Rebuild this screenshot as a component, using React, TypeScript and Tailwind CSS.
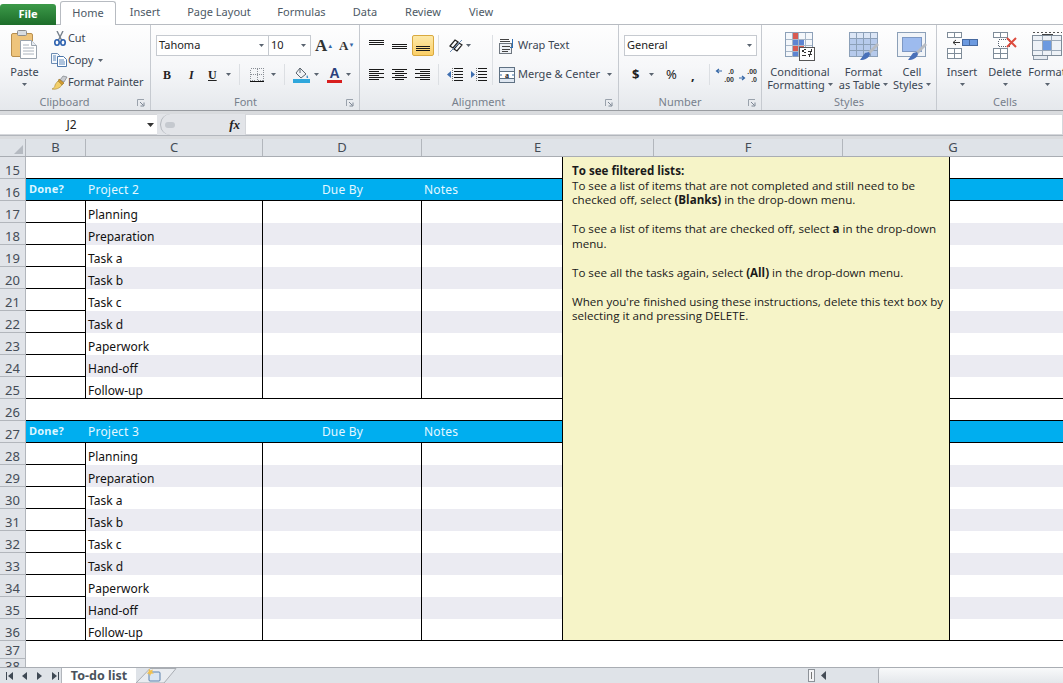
import * as React from "react"

const tasks = ["Planning", "Preparation", "Task a", "Task b", "Task c", "Task d", "Paperwork", "Hand-off", "Follow-up"]
const tabs = [
  { label: "Insert", w: "w-[58px]" },
  { label: "Page Layout", w: "w-[90px]" },
  { label: "Formulas", w: "w-[75px]" },
  { label: "Data", w: "w-[52px]" },
  { label: "Review", w: "w-[64px]" },
  { label: "View", w: "w-[52px]" },
]

function Caret({ className = "" }: { className?: string }) {
  return (
    <svg width="5" height="3" viewBox="0 0 5 3" className={"shrink-0 " + className}>
      <path d="M0 0h5L2.5 3z" fill="#5a6470" />
    </svg>
  )
}

function Launcher() {
  return (
    <svg width="8" height="8" viewBox="0 0 8 8" className="absolute right-[5px] top-[4px]">
      <path d="M.5 7V.5H7" fill="none" stroke="#9aa2ac" />
      <path d="M3 3l3.5 3.5M7 3.5V7H3.5" fill="none" stroke="#7d8794" />
    </svg>
  )
}

function Sep() {
  return <div className="h-[21px] w-px bg-[#dcdfe3] shrink-0" />
}

// horizontal text-alignment style glyph
function Lines({ rows, w = 15 }: { rows: [number, number, number][]; w?: number }) {
  return (
    <svg width={w} height="13" viewBox={`0 0 ${w} 13`} shapeRendering="crispEdges" className="shrink-0">
      {rows.map(([a, b, y], i) => (
        <path key={i} d={`M${a} ${y + 0.5}H${b}`} stroke="#1a1a1a" />
      ))}
    </svg>
  )
}

function Group({ label, width, labelPad, launcher, children }: { label: string; width: string; labelPad: string; launcher?: boolean; children: React.ReactNode }) {
  return (
    <div className={"relative flex flex-col shrink-0 border-r border-[#c6cad0] " + width}>
      <div className="flex flex-1 min-h-0">{children}</div>
      <div className={"relative h-[15px] text-center text-[11px] leading-[14px] text-[#77808c] " + labelPad}>
        {label}
        {launcher && <Launcher />}
      </div>
    </div>
  )
}

function PasteIcon() {
  return (
    <svg width="29" height="30" viewBox="0 0 29 30">
      <rect x="1.5" y="4.5" width="21" height="23" rx="1.5" fill="#eec47c" stroke="#b98f4e" />
      <rect x="7.5" y="1.5" width="9" height="5" rx="1" fill="#d9dde2" stroke="#8d8d8d" />
      <path d="M10.5 11.5h11l5 5v13h-16z" fill="#fff" stroke="#9aa3ad" />
      <path d="M21.5 11.5v5h5" fill="#e6ebf1" stroke="#9aa3ad" />
      <path d="M13 16h6M13 19h11M13 22h11M13 25h11" stroke="#aab2bc" />
    </svg>
  )
}

function CutIcon() {
  return (
    <svg width="12" height="15" viewBox="0 0 12 15">
      <path d="M3 0l5 10M9 0L4 10" stroke="#77808c" strokeWidth="1.4" />
      <ellipse cx="3" cy="11.5" rx="2.2" ry="2.7" fill="none" stroke="#2a5fae" strokeWidth="1.6" />
      <ellipse cx="9" cy="11.5" rx="2.2" ry="2.7" fill="none" stroke="#2a5fae" strokeWidth="1.6" />
    </svg>
  )
}

function CopyIcon() {
  return (
    <svg width="16" height="14" viewBox="0 0 16 14">
      <path d="M.5.5h6l2 2v8h-8z" fill="#f4f8fc" stroke="#6d8cb3" />
      <path d="M6.5 3.5h6l3 3v7h-9z" fill="#fff" stroke="#4d77ab" />
      <path d="M8 7h5M8 9h6M8 11h6M2 3h3M2 5h3M2 7h3" stroke="#5f88bb" />
    </svg>
  )
}

function BrushIcon() {
  return (
    <svg width="17" height="15" viewBox="0 0 17 15">
      <path d="M9 5l3-4 4 1-3 5z" fill="#c9ccd1" stroke="#7d8187" strokeWidth=".7" />
      <path d="M8 4l5 4-2 2-4-3z" fill="#d29a2e" stroke="#8e6a1c" strokeWidth=".6" />
      <path d="M7 6l4 4c-2 3-6 5-10 4 2-1 3-2 3-4 1-2 2-3 3-4z" fill="#f2cf6b" stroke="#a78632" strokeWidth=".6" />
    </svg>
  )
}

function BordersIcon() {
  return (
    <svg width="14" height="14" viewBox="0 0 14 14" shapeRendering="crispEdges">
      <path d="M.5 .5h13v12h-13zM7 1v11M1 6.5h12" fill="none" stroke="#8a8f96" strokeDasharray="1 1" />
      <path d="M0 13.5h14" stroke="#111" />
    </svg>
  )
}

function FillIcon() {
  return (
    <svg width="17" height="16" viewBox="0 0 17 16">
      <path d="M7 1l6 6-5 4-5-5z" fill="#f0f2f5" stroke="#5c6670" />
      <path d="M7 1v5" stroke="#5c6670" />
      <path d="M14 8c1 1.500 1.600 2.500.8 3-.8.300-1.500-.5-1.300-1.300z" fill="#3b88c3" />
      <rect y="12" width="17" height="4" fill="#2fa7dc" />
    </svg>
  )
}

function OrientIcon() {
  return (
    <svg width="24" height="15" viewBox="0 0 24 15">
      <path d="M2 8l5-6 3 2-5 6zM6 11l5-6 3 2-5 6z" fill="none" stroke="#222" strokeWidth="1.200" />
      <path d="M2 14L14 2" stroke="#6a8cb6" />
      <path d="M18 6h5l-2.500 3z" fill="#5a6470" />
    </svg>
  )
}

function IndentIcon({ right = false }: { right?: boolean }) {
  return (
    <svg width="16" height="13" viewBox="0 0 16 13" shapeRendering="crispEdges">
      <path d="M7 .5h9M7 3.500h9M7 6.500h9M7 9.500h9M7 12.500h9" stroke="#1a1a1a" />
      <path d="M5.500 0v13" stroke="#777" strokeDasharray="1 1" />
      <path d={right ? "M4 6.500L0 3v7z" : "M0 6.500L4 3v7z"} fill="#3f6fb0" shapeRendering="auto" />
    </svg>
  )
}

function WrapIcon() {
  return (
    <svg width="16" height="16" viewBox="0 0 16 16" shapeRendering="crispEdges">
      <rect x=".5" y="5.500" width="12" height="10" fill="#eef1f5" stroke="#6f7780" />
      <path d="M1 1.500h9M3 8.500h8M3 11h8M3 13.500h6M1 3.500h10" stroke="#444" />
      <path d="M13.500 1v8H11" fill="none" stroke="#2f6fb3" />
    </svg>
  )
}

function MergeIcon() {
  return (
    <svg width="16" height="16" viewBox="0 0 16 16">
      <rect x=".5" y=".5" width="15" height="15" fill="#dfe7f1" stroke="#5f7183" />
      <path d="M1 4.500h14M1 11.500h14" stroke="#5f7183" />
      <rect x="1" y="5" width="14" height="6" fill="#fff" />
      <text x="8" y="10.500" fontSize="8" fontWeight="700" textAnchor="middle" fill="#222" fontFamily="'Liberation Serif',serif">a</text>
      <path d="M1 8h2M13 8h2" stroke="#3b6ea8" />
    </svg>
  )
}

function DecIcon({ top, bottom, down = false }: { top: string; bottom: string; down?: boolean }) {
  return (
    <svg width="20" height="16" viewBox="0 0 20 16">
      <text x="19" y="6.500" textAnchor="end" fontSize="7" fontWeight="700" fill="#333" fontFamily="'Liberation Sans',sans-serif">{top}</text>
      <text x="19" y="14.500" textAnchor="end" fontSize="7" fontWeight="700" fill="#333" fontFamily="'Liberation Sans',sans-serif">{bottom}</text>
      <path d={down ? "M1 11h5M4 9l2.500 2L4 13" : "M7 4H2M4 2L1.500 4 4 6"} fill="none" stroke="#3567a6" strokeWidth="1.200" />
    </svg>
  )
}

function CondIcon() {
  return (
    <svg width="30" height="29" viewBox="0 0 30 29" shapeRendering="crispEdges">
      <rect x=".5" y=".5" width="27" height="24" fill="#f4f7fb" stroke="#8ca0b8" />
      <rect x="7" y="1" width="6" height="6" fill="#d85a50" />
      <rect x="7" y="7" width="12" height="6" fill="#5d84d2" />
      <rect x="7" y="13" width="12" height="6" fill="#d85a50" />
      <rect x="7" y="19" width="6" height="5" fill="#5d84d2" />
      <path d="M7 1v24M13 1v24M20 1v24M1 7h26M1 13h26M1 19h26" stroke="#a7b6c8" fill="none" />
      <rect x="14.500" y="15.500" width="15" height="13" fill="#fff" stroke="#555" />
      <path d="M21 17l-4 2 4 2M17 23h4M23 19h4M23 22h4M27 17l-3 8M17 25h0" fill="none" stroke="#333" />
    </svg>
  )
}

function TableIcon() {
  return (
    <svg width="30" height="29" viewBox="0 0 30 29">
      <rect x=".5" y=".5" width="28" height="24" fill="#dce6f6" stroke="#8ca0b8" />
      <rect x="1" y="7" width="27" height="17" fill="#b6caec" />
      <path d="M7.500 1v24M14.500 1v24M21.500 1v24M1 6.500h27M1 12.500h27M1 18.500h27" stroke="#8ca0b8" />
      <path d="M29 12l-9 9" stroke="#b8bcc2" strokeWidth="3" />
      <path d="M20 20l-4 1-5 7c5 0 9-2 10-6z" fill="#4970b8" />
    </svg>
  )
}

function StyleIcon() {
  return (
    <svg width="30" height="29" viewBox="0 0 30 29">
      <rect x=".5" y=".5" width="28" height="24" fill="#f1f4f8" stroke="#8ca0b8" />
      <rect x="5.500" y="5.500" width="19" height="14" fill="#9dbbee" stroke="#7d98c4" />
      <path d="M29 12l-9 9" stroke="#b8bcc2" strokeWidth="3" />
      <path d="M20 20l-4 1-5 7c5 0 9-2 10-6z" fill="#4970b8" />
    </svg>
  )
}

function InsertIcon() {
  return (
    <svg width="31" height="27" viewBox="0 0 31 27" shapeRendering="crispEdges">
      <path d="M.5.500h14v5h-14zM7.500 1v4M.5 16.500h14v10h-14zM7.500 17v9M1 21.500h13" fill="#fff" stroke="#7f8c99" />
      <rect x="15.500" y="7.500" width="15" height="6" fill="#6c9ae0" stroke="#46699f" />
      <path d="M22.500 8v5" stroke="#46699f" />
      <path d="M13 10.500H6M9 8l-3 2.500L9 13" fill="none" stroke="#333" shapeRendering="auto" />
    </svg>
  )
}

function DeleteIcon() {
  return (
    <svg width="25" height="27" viewBox="0 0 25 27">
      <path d="M.5.500h14v5h-14zM7.500 1v4M.5 16.500h14v10h-14zM7.500 17v9M1 21.500h13" fill="#fff" stroke="#7f8c99" shapeRendering="crispEdges" />
      <rect x="5.500" y="7.500" width="11" height="7" fill="#fff" stroke="#5a6470" strokeDasharray="1 1" shapeRendering="crispEdges" />
      <path d="M14 6l9 9M23 6l-9 9" stroke="#dd4b3e" strokeWidth="2" />
    </svg>
  )
}

function FormatCellIcon() {
  return (
    <svg width="31" height="29" viewBox="0 0 31 29" shapeRendering="crispEdges">
      <path d="M1 .5h29" stroke="#555" strokeDasharray="2 2" />
      <path d="M10 2.500h11" stroke="#444" />
      <rect x=".5" y="3.500" width="29" height="20" rx="1" fill="#eef2f7" stroke="#7f8c99" />
      <rect x="10" y="8" width="9" height="11" fill="#6c9ae0" />
      <path d="M10 4v19M19.500 4v19M1 8.500h28M1 18.500h28" stroke="#9aa8b8" />
      <path d="M1.500 24v3.500h14V24" fill="#e6ebf1" stroke="#8a97a6" />
    </svg>
  )
}

function BigButton({ icon, lines, width }: { icon: React.ReactNode; lines: [string, string | null]; width: string }) {
  return (
    <div className={"flex flex-col items-center shrink-0 pt-[7px] " + width}>
      <div className="h-[33px] flex items-start">{icon}</div>
      <div className="text-[11px] leading-[13px] whitespace-nowrap text-[#3b4653]">{lines[0]}</div>
      {lines[1] ? (
        <div className="flex items-center gap-[3px] text-[11px] leading-[13px] whitespace-nowrap text-[#3b4653]">
          {lines[1]}
          <Caret />
        </div>
      ) : (
        <div className="h-[13px] flex items-center"><Caret /></div>
      )}
    </div>
  )
}

function Ribbon() {
  return (
    <div className="flex h-[85px] text-[#3b4653] bg-gradient-to-b from-[#fefefe] via-[#f6f7f9] to-[#e5e8ec]">
      <Group label="Clipboard" width="w-[151px]" labelPad="pr-[21px]" launcher>
        <div className="flex flex-col items-center w-[49px] pt-[4px]">
          <PasteIcon />
          <div className="mt-[6px] text-[11px] leading-[13px]">Paste</div>
          <Caret className="mt-[5px]" />
        </div>
        <div className="flex flex-col pt-[2px] pl-[2px] text-[11px] tracking-[-0.15px] whitespace-nowrap">
          <div className="flex items-center h-[22px]"><div className="w-[17px] pl-[3px]"><CutIcon /></div>Cut</div>
          <div className="flex items-center h-[22px]"><div className="w-[17px]"><CopyIcon /></div>Copy<Caret className="ml-[5px]" /></div>
          <div className="flex items-center h-[22px]"><div className="w-[17px]"><BrushIcon /></div>Format Painter</div>
        </div>
      </Group>

      <Group label="Font" width="w-[209px]" labelPad="pr-[19px]" launcher>
        <div className="flex flex-col pl-[5px] pt-[10px] w-full">
          <div className="flex items-center h-[21px]">
            <div className="flex items-center justify-between w-[113px] h-full bg-white border border-[#c6cad0] pl-[2px] pr-[4px] text-[11px] text-[#222]">Tahoma<Caret /></div>
            <div className="flex items-center justify-between w-[42px] h-full bg-white border border-l-0 border-[#c6cad0] pl-[2px] pr-[4px] text-[11px] text-[#222]">10<Caret /></div>
            <div className="ml-[4px] w-[21px] text-[17px] font-bold leading-none font-['Liberation_Serif',serif] text-[#333]">A<sup className="text-[6px] text-[#3567a6]">▲</sup></div>
            <div className="ml-[3px] w-[17px] text-[13px] font-bold leading-none font-['Liberation_Serif',serif] text-[#333]">A<sup className="text-[6px] text-[#3567a6]">▼</sup></div>
          </div>
          <div className="flex items-center h-[21px] mt-[8px] text-[#222]">
            <div className="w-[26px] pl-[7px] text-[12px] font-bold font-['Liberation_Serif',serif]">B</div>
            <div className="w-[23px] pl-[7px] text-[12px] font-bold italic font-['Liberation_Serif',serif]">I</div>
            <div className="w-[18px] pl-[3px] text-[12px] font-bold underline font-['Liberation_Serif',serif]">U</div>
            <Caret className="ml-[3px] mr-[8px]" />
            <Sep />
            <div className="ml-[10px]"><BordersIcon /></div>
            <Caret className="ml-[7px] mr-[8px]" />
            <Sep />
            <div className="ml-[8px]"><FillIcon /></div>
            <Caret className="ml-[4px]" />
            <div className="relative ml-[8px] w-[15px] h-[16px] text-center text-[14px] leading-[13px] font-bold font-['Liberation_Sans',sans-serif] text-[#2a3f7c]">
              A
              <div className="absolute bottom-0 left-0 right-0 h-[3px] bg-[#d81e1e]" />
            </div>
            <Caret className="ml-[4px]" />
          </div>
        </div>
      </Group>

      <Group label="Alignment" width="w-[259px]" labelPad="pr-[21px]" launcher>
        <div className="flex flex-col pl-[9px] pt-[10px]">
          <div className="flex items-center h-[21px]">
            <div className="w-[23px]"><Lines rows={[[0, 15, 1], [0, 15, 3], [0, 15, 5]]} /></div>
            <div className="w-[20px]"><Lines rows={[[0, 15, 5], [0, 15, 7], [0, 15, 9]]} /></div>
            <div className="flex items-center justify-center w-[22px] h-[21px] rounded-[2px] bg-gradient-to-b from-[#fde9a8] to-[#fbcf66] border border-[#d9a93f]"><Lines rows={[[0, 14, 7], [0, 14, 9], [0, 14, 11]]} /></div>
            <div className="ml-[4px] mr-[9px]"><Sep /></div>
            <OrientIcon />
          </div>
          <div className="flex items-center h-[21px] mt-[8px]">
            <div className="w-[23px]"><Lines rows={[[0, 15, 1], [0, 10, 3], [0, 15, 5], [0, 10, 7], [0, 15, 9], [0, 10, 11]]} /></div>
            <div className="w-[23px]"><Lines rows={[[0, 15, 1], [3, 12, 3], [0, 15, 5], [3, 12, 7], [0, 15, 9], [3, 12, 11]]} /></div>
            <div className="w-[19px]"><Lines rows={[[0, 15, 1], [5, 15, 3], [0, 15, 5], [5, 15, 7], [0, 15, 9], [5, 15, 11]]} /></div>
            <div className="ml-[4px] mr-[8px]"><Sep /></div>
            <IndentIcon />
            <div className="ml-[8px]"><IndentIcon right /></div>
          </div>
        </div>
        <div className="ml-[5px] h-[50px] mt-[10px] w-px bg-[#dcdfe3]" />
        <div className="flex flex-col pl-[6px] pt-[10px] text-[11px] whitespace-nowrap">
          <div className="flex items-center gap-[3px] h-[21px]"><WrapIcon />Wrap Text</div>
          <div className="flex items-center gap-[3px] h-[21px] mt-[8px]"><MergeIcon />Merge &amp; Center<Caret className="ml-[4px]" /></div>
        </div>
      </Group>

      <Group label="Number" width="w-[143px]" labelPad="pr-[20px]" launcher>
        <div className="flex flex-col pl-[5px] pt-[10px]">
          <div className="flex items-center justify-between w-[133px] h-[21px] bg-white border border-[#c6cad0] pl-[2px] pr-[4px] text-[11px] text-[#222]">General<Caret /></div>
          <div className="flex items-center h-[21px] mt-[8px] text-[#222]">
            <div className="w-[22px] pl-[8px] text-[13px] font-bold">$</div>
            <Caret className="ml-[3px]" />
            <div className="ml-[12px] w-[22px] text-[13px]">%</div>
            <div className="w-[21px] text-[13px] font-bold pl-[3px] leading-[10px]">,</div>
            <Sep />
            <div className="ml-[5px]"><DecIcon top=".0" bottom=".00" /></div>
            <div className="ml-[3px]"><DecIcon top=".00" bottom=".0" down /></div>
          </div>
        </div>
      </Group>

      <Group label="Styles" width="w-[175px]" labelPad="">
        <BigButton icon={<CondIcon />} lines={["Conditional", "Formatting"]} width="w-[76px]" />
        <BigButton icon={<TableIcon />} lines={["Format", "as Table"]} width="w-[51px]" />
        <BigButton icon={<StyleIcon />} lines={["Cell", "Styles"]} width="w-[46px]" />
      </Group>

      <Group label="Cells" width="w-[126px] border-r-0" labelPad="pl-[10px]">
        <BigButton icon={<InsertIcon />} lines={["Insert", null]} width="w-[50px]" />
        <BigButton icon={<DeleteIcon />} lines={["Delete", null]} width="w-[36px]" />
        <BigButton icon={<FormatCellIcon />} lines={["Format", null]} width="w-[40px] ml-[4px]" />
      </Group>
    </div>
  )
}

function RowHead({ n, h = "h-[22px]", clip }: { n: number; h?: string; clip?: boolean }) {
  return (
    <div className={"w-[26px] shrink-0 bg-[#e1e4e9] border-r border-b border-[#b2b6bc] text-center text-[13px] text-[#444c56] flex items-end justify-center overflow-hidden " + h}>
      <span className={clip ? "leading-[14px] -mb-[6px]" : "leading-[16px]"}>{n}</span>
    </div>
  )
}

function BlankRow({ n }: { n: number }) {
  return (
    <div className="flex">
      <RowHead n={n} />
      <div className="flex-1 border-b border-black" />
    </div>
  )
}

function ProjectRow({ n, name }: { n: number; name: string }) {
  return (
    <div className="flex">
      <RowHead n={n} />
      <div className="flex flex-1 h-[22px] items-center bg-[#00aeef] border-b border-black text-[#e4f8ff] text-[12px] tracking-[0.2px]">
        <div className="w-[60px] pl-[3px] text-[11px] font-bold text-[#dcf6ff]">Done?</div>
        <div className="w-[177px] pl-[2px]">{name}</div>
        <div className="w-[159px] text-center">Due By</div>
        <div className="pl-[2px]">Notes</div>
      </div>
    </div>
  )
}

function TaskRow({ n, task, last }: { n: number; task: string; last: boolean }) {
  const band = n % 2 === (n < 27 ? 0 : 1) ? "bg-[#ebebf2]" : ""
  return (
    <div className="flex">
      <RowHead n={n} />
      <div className={"flex flex-1 h-[22px] " + (last ? "border-b border-black" : "")}>
        <div className={"w-[60px] border-r border-black " + (last ? "" : "border-b")} />
        <div className={"w-[177px] pl-[2px] border-r border-black flex items-end text-[12px] leading-[17px] text-[#111] " + (last ? "-mb-px " : "") + band}>{task}</div>
        <div className={"w-[159px] border-r border-black " + band} />
        <div className={"flex-1 " + band} />
      </div>
    </div>
  )
}

function Block({ start, name }: { start: number; name: string }) {
  return (
    <>
      <ProjectRow n={start} name={name} />
      {tasks.map((t, i) => (
        <TaskRow key={t} n={start + 1 + i} task={t} last={i === tasks.length - 1} />
      ))}
    </>
  )
}

function NoteBox() {
  return (
    <div className="absolute left-[562px] top-0 w-[388px] h-[484px] bg-[#f6f4c8] border-x border-b border-black pl-[9px] pt-[7px] text-[11.600px] leading-[14.500px] text-[#1a1a1a] whitespace-nowrap font-['Open_Sans',sans-serif]">
      <div className="font-bold">To see filtered lists:</div>
      <div>To see a list of items that are not completed and still need to be</div>
      <div>checked off, select <b>(Blanks)</b> in the drop-down menu.</div>
      <div className="mt-[14.500px]">To see a list of items that are checked off, select <b>a</b> in the drop-down</div>
      <div>menu.</div>
      <div className="mt-[14.500px]">To see all the tasks again, select <b>(All)</b> in the drop-down menu.</div>
      <div className="mt-[14.500px]">When you're finished using these instructions, delete this text box by</div>
      <div>selecting it and pressing DELETE.</div>
    </div>
  )
}

function SheetBar() {
  return (
    <div className="flex h-[16px] shrink-0 bg-[#dfe3e8] border-t border-[#a9adb3] text-[#3a4450]">
      <div className="flex items-center w-[62px] pl-[6px] gap-[7px] border-r border-[#b2b6bc]">
        <svg width="7" height="8" viewBox="0 0 7 8"><path d="M0 0h1v8H0zM7 0v8L2 4z" fill="#3f4954" /></svg>
        <svg width="5" height="8" viewBox="0 0 5 8" className="ml-[2px]"><path d="M5 0v8L0 4z" fill="#3f4954" /></svg>
        <svg width="5" height="8" viewBox="0 0 5 8" className="ml-[3px]"><path d="M0 0v8l5-4z" fill="#3f4954" /></svg>
        <svg width="7" height="8" viewBox="0 0 7 8" className="ml-[3px]"><path d="M6 0h1v8H6zM0 0v8l5-4z" fill="#3f4954" /></svg>
      </div>
      <div className="w-[74px] bg-white text-center text-[12.500px] font-bold leading-[15px] text-[#4a525c]">To-do list</div>
      <svg width="42" height="15" viewBox="0 0 42 15" className="shrink-0">
        <path d="M0 15L14 .5h26L28 15z" fill="#e9ecf0" stroke="#a9adb3" />
        <rect x="13" y="4" width="11" height="9" rx="1" fill="#dbe6f3" stroke="#5d82ad" />
        <path d="M13 .5l1.500 2 2.500-1-1 2.500 2 1.500-3 .3-1 2.500-.8-2.500-2.700-.3 2-1.500z" fill="#f2c14e" />
      </svg>
      <div className="flex-1" />
      <div className="flex items-center w-[70px]">
        <div className="flex items-center justify-center w-[7px] h-[13px] bg-[#f3f4f6] border border-[#8d9298]"><div className="w-px h-[7px] bg-[#777]" /></div>
        <svg width="5" height="9" viewBox="0 0 5 9" className="ml-[6px]"><path d="M5 0v9L0 4.500z" fill="#444c56" /></svg>
      </div>
      <div className="w-[185px] bg-gradient-to-b from-[#f8f9fa] to-[#e4e7eb] border-l border-[#a9adb3] rounded-tl-[2px]" />
    </div>
  )
}

export default function App() {
  return (
    <div className="flex flex-col w-[1063px] h-[683px] overflow-hidden bg-white font-['Noto_Sans',sans-serif]">
      {/* tabs */}
      <div className="flex items-end h-[25px] shrink-0 border-b border-[#b7bbc1] text-[11px] text-[#4d5965]">
        <div className="w-[56px] h-[21px] mb-[-1px] flex items-center justify-center rounded-t-[3px] bg-gradient-to-b from-[#3c9a49] to-[#1d6d2a] text-white font-bold text-[11px]">File</div>
        <div className="ml-[4px] w-[56px] h-[24px] mb-[-1px] flex items-center justify-center rounded-t-[3px] bg-white border border-b-0 border-[#b7bbc1]">Home</div>
        {tabs.map((t) => (
          <div key={t.label} className={"h-[24px] flex items-center justify-center " + t.w}>{t.label}</div>
        ))}
      </div>

      <Ribbon />
      <div className="h-[4px] shrink-0 bg-[#d9dbde] border-t border-[#999ca1]" />

      {/* formula bar */}
      <div className="flex h-[21px] shrink-0 bg-[#e2e4e8] text-[12px] text-[#222]">
        <div className="relative w-[157px] bg-white flex items-center justify-center pr-[14px] border-y border-[#d5d7db]">
          J2
          <svg width="7" height="4" viewBox="0 0 7 4" className="absolute right-[3px] top-[8px]"><path d="M0 0h7L3.500 4z" fill="#333" /></svg>
        </div>
        <div className="flex items-center justify-between w-[85px] ml-[3px] pl-[4px] pr-[5px] rounded-l-full border-l border-[#b2b6bc]">
          <div className="w-[10px] h-[6px] rounded-full bg-[#c5c9cf]" />
          <span className="italic font-bold text-[13px] font-['Liberation_Serif',serif]">fx</span>
        </div>
        <div className="flex-1 bg-white border border-[#d5d7db]" />
      </div>
      <div className="h-[4px] shrink-0 bg-[#d9dbde] border-t border-[#b2b6bc]" />

      {/* column headers */}
      <div className="flex h-[18px] shrink-0 bg-[#dfe3e8] border-b border-[#a9adb3] text-[13px] leading-[17px] text-center text-[#444c56]">
        <div className="w-[26px] border-r border-[#b2b6bc] flex items-end justify-end p-[2px]">
          <svg width="9" height="9" viewBox="0 0 9 9"><path d="M9 0v9H0z" fill="#b5bac1" /></svg>
        </div>
        <div className="w-[60px] border-r border-[#b2b6bc]">B</div>
        <div className="w-[177px] border-r border-[#b2b6bc]">C</div>
        <div className="w-[159px] border-r border-[#b2b6bc]">D</div>
        <div className="w-[232px] border-r border-[#b2b6bc]">E</div>
        <div className="w-[189px] border-r border-[#b2b6bc]">F</div>
        <div className="flex-1">G</div>
      </div>

      {/* sheet */}
      <div className="relative flex-1 min-h-0 overflow-hidden">
        <BlankRow n={15} />
        <Block start={16} name="Project 2" />
        <BlankRow n={26} />
        <Block start={27} name="Project 3" />
        <div className="flex"><RowHead n={37} h="h-[18px]" /></div>
        <div className="flex"><RowHead n={38} h="h-[9px]" clip /></div>
        <NoteBox />
      </div>

      <SheetBar />
    </div>
  )
}
